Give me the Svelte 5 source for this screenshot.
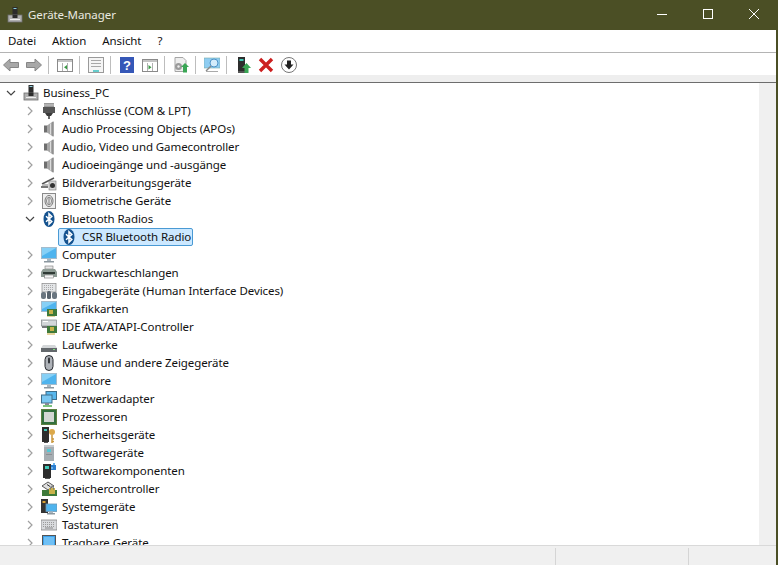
<script lang="ts">
  const menus = ['Datei', 'Aktion', 'Ansicht', '?']

  const groups = [
    { label: 'Anschlüsse (COM & LPT)', icon: 'port' },
    { label: 'Audio Processing Objects (APOs)', icon: 'speaker' },
    { label: 'Audio, Video und Gamecontroller', icon: 'speaker' },
    { label: 'Audioeingänge und -ausgänge', icon: 'speaker' },
    { label: 'Bildverarbeitungsgeräte', icon: 'camera' },
    { label: 'Biometrische Geräte', icon: 'finger' },
    { label: 'Bluetooth Radios', icon: 'bt', open: true },
    { label: 'CSR Bluetooth Radio', icon: 'bt', child: true },
    { label: 'Computer', icon: 'monitor' },
    { label: 'Druckwarteschlangen', icon: 'printer' },
    { label: 'Eingabegeräte (Human Interface Devices)', icon: 'hid' },
    { label: 'Grafikkarten', icon: 'gpu' },
    { label: 'IDE ATA/ATAPI-Controller', icon: 'ide' },
    { label: 'Laufwerke', icon: 'drive' },
    { label: 'Mäuse und andere Zeigegeräte', icon: 'mouse' },
    { label: 'Monitore', icon: 'monitor' },
    { label: 'Netzwerkadapter', icon: 'net' },
    { label: 'Prozessoren', icon: 'cpu' },
    { label: 'Sicherheitsgeräte', icon: 'key' },
    { label: 'Softwaregeräte', icon: 'tower' },
    { label: 'Softwarekomponenten', icon: 'swcomp' },
    { label: 'Speichercontroller', icon: 'storage' },
    { label: 'Systemgeräte', icon: 'system' },
    { label: 'Tastaturen', icon: 'keyboard' },
    { label: 'Tragbare Geräte', icon: 'portable' },
  ]
</script>

{#snippet pc()}
  <svg width="16" height="16" viewBox="0 0 16 16">
    <rect x="5.500" y="0" width="5" height="8" fill="#2c2c2c" />
    <rect x="6.500" y="1" width="3" height="1" fill="#8fd0e0" />
    <rect x="1" y="8" width="14" height="7" fill="#b0b0b0" stroke="#6e6e6e" stroke-width="0.8" />
    <rect x="5.500" y="8" width="5" height="3" fill="#2c2c2c" />
    <rect x="3" y="12" width="10" height="1" fill="#eee" />
  </svg>
{/snippet}

{#snippet icon(name)}
  <svg width="16" height="16" viewBox="0 0 16 16">
    {#if name === 'port'}
      <rect x="3" y="0" width="10" height="4" fill="#9a9a9a" />
      <path d="M4 1v2M6 1v2M8 1v2M10 1v2M12 1v2" stroke="#e4e4e4" stroke-width="0.7" />
      <rect x="2" y="4" width="12" height="6" fill="#555" />
      <path d="M4 10h8l-2 3h-4z" fill="#3a3a3a" />
      <rect x="7" y="13" width="2" height="3" fill="#666" />
    {:else if name === 'speaker'}
      <rect x="3" y="4.500" width="3.500" height="7" fill="#6f6f6f" />
      <path d="M6 4.500 12.500 0v16L6 11.500z" fill="#a6a6a6" />
      <path d="M9.500 2.500v11" stroke="#dcdcdc" />
      <path d="M12 1v14" stroke="#7c7c7c" />
    {:else if name === 'camera'}
      <path d="M1 9 13 3" stroke="#555" stroke-width="1.500" />
      <rect x="1" y="9" width="6" height="2" fill="#bbb" />
      <rect x="8" y="6" width="7" height="9" fill="#d4d4d4" stroke="#777" stroke-width="0.6" />
      <circle cx="11.500" cy="10.500" r="2.500" fill="#333" />
      <rect x="0" y="11" width="7" height="2" fill="#777" />
    {:else if name === 'finger'}
      <rect x="1.500" y="0.500" width="13" height="15" fill="#eee" stroke="#8a8a8a" />
      <ellipse cx="8" cy="8" rx="4" ry="5.500" fill="none" stroke="#777" />
      <ellipse cx="8" cy="8" rx="2.500" ry="3.800" fill="none" stroke="#888" />
      <path d="M8 5v6" stroke="#777" />
    {:else if name === 'bt'}
      <ellipse cx="8" cy="8" rx="5.500" ry="8" fill="#14528f" />
      <path d="M5 5.200 10.800 10.600 8 13.200V2.800l2.800 2.600L5 10.800" fill="none" stroke="#fff" stroke-width="1.500" />
    {:else if name === 'monitor'}
      <rect x="0.500" y="0.500" width="15" height="11" fill="#4fb4ee" stroke="#a3bccd" />
      <path d="M1 1h14L1 9z" fill="#86d0f6" />
      <rect x="6" y="12" width="4" height="2" fill="#a9b6bf" />
      <rect x="3" y="14" width="10" height="1.500" fill="#8b979f" />
    {:else if name === 'printer'}
      <rect x="4" y="1" width="8" height="3" fill="#e8e8e8" stroke="#777" stroke-width="0.6" />
      <path d="M2 4h12l2 3v5H0V7z" fill="#8c9a93" />
      <rect x="2" y="7" width="12" height="2" fill="#2f3a35" />
      <rect x="3.500" y="10" width="9" height="3" fill="#f6f6f6" stroke="#666" stroke-width="0.5" />
    {:else if name === 'hid'}
      <rect x="1" y="0.500" width="14" height="8.500" fill="#e4e6e8" stroke="#888" stroke-width="0.7" />
      <path d="M3 2.500h10M3 4.500h10M3 6.500h10" stroke="#9a9a9a" stroke-width="0.8" stroke-dasharray="1 1" />
      <rect x="0" y="9" width="5" height="7" rx="2" fill="#6a7680" />
      <rect x="6" y="8" width="4" height="8" rx="1.500" fill="#59656f" />
      <rect x="11" y="9" width="5" height="7" rx="2" fill="#6a7680" />
    {:else if name === 'gpu'}
      <rect x="0.500" y="0.500" width="15" height="10" fill="#4fb4ee" stroke="#a3bccd" />
      <path d="M1 1h14L1 8z" fill="#86d0f6" />
      <rect x="6" y="8" width="10" height="7" fill="#3e7a3a" />
      <rect x="8" y="9" width="4" height="4" fill="#c9b24a" />
      <path d="M7 15v1M9 15v1M11 15v1M13 15v1" stroke="#c9a93a" />
    {:else if name === 'ide'}
      <rect x="0.500" y="1" width="15" height="6" fill="#d3d7d9" stroke="#7f8588" stroke-width="0.7" />
      <rect x="2" y="2" width="5" height="1" fill="#fff" />
      <rect x="6" y="7" width="10" height="7" fill="#3e7a3a" />
      <rect x="9" y="8" width="4" height="4" fill="#c9b24a" />
      <rect x="1" y="7" width="5" height="2" fill="#75797b" />
      <path d="M7 14v2M9 14v2M11 14v2M13 14v2" stroke="#c9a93a" />
    {:else if name === 'drive'}
      <path d="M2 8h12l2 3H0z" fill="#d4d7d9" />
      <rect x="0" y="11" width="16" height="4" fill="#63686c" />
      <rect x="12" y="12" width="2" height="1" fill="#7fe07f" />
    {:else if name === 'mouse'}
      <rect x="4" y="0.500" width="8" height="15" rx="4" fill="#aeb2b8" stroke="#26292e" />
      <rect x="7" y="2.500" width="2" height="6" rx="1" fill="#33363b" />
    {:else if name === 'net'}
      <rect x="5" y="0.500" width="10.500" height="8" fill="#57b6ec" stroke="#3e6f8c" />
      <rect x="0.500" y="4" width="10.500" height="8" fill="#7bc8f2" stroke="#3e6f8c" />
      <rect x="4" y="12" width="4" height="2" fill="#889" />
      <path d="M2 15h9" stroke="#4fae4f" stroke-width="1.500" />
    {:else if name === 'cpu'}
      <rect x="0" y="0" width="16" height="16" fill="#33703e" />
      <rect x="0.500" y="0.500" width="15" height="15" fill="none" stroke="#c8a84a" stroke-width="0.6" stroke-dasharray="1 1" />
      <rect x="3" y="3" width="10" height="10" fill="#d3d7d3" />
    {:else if name === 'key'}
      <rect x="1" y="0" width="7" height="15" fill="#2d2d2d" />
      <rect x="3" y="2" width="3" height="2" fill="#3fc9b8" />
      <rect x="3" y="15" width="4" height="1" fill="#555" />
      <circle cx="11" cy="5" r="3" fill="#dba84a" />
      <path d="M11 8v8M11 12h2M11 14.500h2" stroke="#c9973c" stroke-width="1.500" />
    {:else if name === 'tower'}
      <path d="M3 1.500h10V16H3z" fill="#a6adb2" />
      <rect x="3" y="0" width="10" height="2" fill="#c6cbcf" />
      <rect x="6" y="4" width="4" height="3" fill="#55c7d6" />
      <rect x="5" y="9" width="6" height="1" fill="#8a8f93" />
    {:else if name === 'swcomp'}
      <rect x="2" y="1" width="8" height="14" fill="#2d2d2d" />
      <rect x="4" y="3" width="4" height="3" fill="#3fc9b8" />
      <rect x="4" y="15" width="5" height="1" fill="#555" />
      <path d="M10 2h5v5h-5z" fill="#2e7fd0" />
      <path d="M12 0h2v2h-2zM10 4h2v2h-2z" fill="#6ab4ee" />
    {:else if name === 'storage'}
      <path d="M1 5 7 1l6 4-6 4z" fill="#e0e0e0" stroke="#333" stroke-width="0.8" />
      <path d="M6 3.500 9 5.500" stroke="#333" />
      <rect x="1" y="9" width="15" height="6" fill="#3e7a3a" />
      <rect x="8" y="7" width="6" height="6" fill="#c9b24a" />
      <path d="M9.500 8.500v-2a1.500 1.500 0 0 1 3 0v2" fill="none" stroke="#777" />
    {:else if name === 'system'}
      <rect x="0" y="0" width="7" height="14" fill="#333" />
      <rect x="1.500" y="2" width="3" height="2" fill="#d9a030" />
      <rect x="5" y="5" width="11" height="7.500" fill="#4fb4ee" stroke="#6e98b3" stroke-width="0.8" />
      <rect x="8" y="12.500" width="4" height="1.500" fill="#a9b6bf" />
      <rect x="6" y="14" width="8" height="1.500" fill="#8b979f" />
    {:else if name === 'keyboard'}
      <rect x="0" y="3" width="16" height="10" fill="#d9dbde" stroke="#777" stroke-width="0.7" />
      <path d="M2 5.500h12M2 7.500h12M2 9.500h12" stroke="#9a9a9a" stroke-dasharray="1 1" />
      <rect x="4" y="10.500" width="8" height="1" fill="#8a8a8a" />
    {:else if name === 'portable'}
      <rect x="1.500" y="0.500" width="13" height="15" fill="#3da3ee" stroke="#555" />
      <rect x="3" y="2" width="10" height="10" fill="#6fc0f5" />
    {/if}
  </svg>
{/snippet}

{#snippet expanded()}
  <svg class="chev" width="10" height="10" viewBox="0 0 10 10"><path d="M1 3l4 4 4-4" fill="none" stroke="#444" stroke-width="1.200" /></svg>
{/snippet}

<div class="window">
  <header class="titlebar">
    <span class="title-icon">{@render pc()}</span>
    <span class="title">Geräte-Manager</span>
    <div class="caption">
      <svg width="46" height="30" viewBox="0 0 46 30"><path d="M18 14.500h10" stroke="#fff" /></svg>
      <svg width="46" height="30" viewBox="0 0 46 30"><rect x="18.500" y="9.500" width="9" height="9" fill="none" stroke="#fff" /></svg>
      <svg width="46" height="30" viewBox="0 0 46 30"><path d="M18 9l10 10M28 9 18 19" stroke="#fff" /></svg>
    </div>
  </header>

  <nav class="menubar">
    {#each menus as m}
      <span>{m}</span>
    {/each}
  </nav>

  <div class="toolbar">
    <svg width="16" height="16" viewBox="0 0 16 16"><path d="M.5 8 7 2v3.500h8.500v5H7V14z" fill="#a8a8a8" stroke="#868686" /></svg>
    <svg width="16" height="16" viewBox="0 0 16 16"><path d="M15.500 8 9 2v3.500H.5v5H9V14z" fill="#a8a8a8" stroke="#868686" /></svg>
    <i class="sep"></i>
    <svg width="16" height="16" viewBox="0 0 16 16"><rect x="0.500" y="2.500" width="15" height="12" fill="#fff" stroke="#8a8a8a" /><rect x="1" y="3" width="14" height="2" fill="#c4c4c4" /><path d="M5.500 6v8M10.500 6v8" stroke="#b0b0b0" /><path d="M10 8v4.500L7 10.200z" fill="#3a9a45" /></svg>
    <i class="sep"></i>
    <svg width="16" height="16" viewBox="0 0 16 16"><rect x="0.500" y="0.500" width="15" height="15" fill="#f5f5f5" stroke="#9a9a9a" /><path d="M3 3.500h10M3 6.500h10M3 9.500h10" stroke="#a8a8a8" /><rect x="5" y="13" width="6" height="2" fill="#6cc" /></svg>
    <i class="sep"></i>
    <svg width="16" height="16" viewBox="0 0 16 16"><rect x="1" y="0" width="14" height="16" fill="#3557b7" /><text x="8" y="13" font-size="13" font-weight="700" font-family="Liberation Sans" text-anchor="middle" fill="#fff">?</text></svg>
    <svg width="16" height="16" viewBox="0 0 16 16"><rect x="0.500" y="2.500" width="15" height="12" fill="#fff" stroke="#8a8a8a" /><rect x="1" y="3" width="14" height="2" fill="#c4c4c4" /><path d="M5.500 6v8M10.500 6v8" stroke="#b0b0b0" /><path d="M6.500 8v4.500l3-2.300z" fill="#3a9a45" /></svg>
    <i class="sep"></i>
    <svg width="16" height="16" viewBox="0 0 16 16"><path d="M2 .5h8l3 3v11H2z" fill="#eee" stroke="#a5a5a5" /><circle cx="5.500" cy="9.500" r="3.500" fill="#9a9a9a" /><circle cx="5.500" cy="9.500" r="1.200" fill="#eee" /><path d="M12 6l4 4h-2v5.500h-4V10H8z" fill="#3aa655" /></svg>
    <i class="sep"></i>
    <svg width="16" height="16" viewBox="0 0 16 16"><rect x="0" y="1" width="16" height="10" fill="#8fcdf2" stroke="#7aa" stroke-width="0.6" /><circle cx="10" cy="6" r="4" fill="#d3ecfb" stroke="#4d93c7" /><path d="M7 9l-5 5" stroke="#8a8a8a" stroke-width="1.500" /><rect x="2" y="14" width="12" height="1" fill="#aaa" /></svg>
    <i class="sep"></i>
    <svg width="16" height="16" viewBox="0 0 16 16"><rect x="3" y="0" width="7" height="14" fill="#2d2d2d" /><rect x="4.500" y="2" width="4" height="2" fill="#3fc9b8" /><rect x="3" y="14" width="7" height="2" fill="#555" /><path d="M11.500 6l4.500 5h-2.500v5h-4v-5H7z" fill="#3aa655" /></svg>
    <svg width="16" height="16" viewBox="0 0 16 16"><path d="M2 2l12 12M14 2 2 14" stroke="#cc1f1f" stroke-width="3.400" /></svg>
    <svg width="16" height="16" viewBox="0 0 16 16"><circle cx="8" cy="8" r="7.500" fill="#fff" stroke="#777" /><path d="M6 3.500h4v4h2.500L8 12.500 3.500 7.500H6z" fill="#222" /></svg>
  </div>
  <div class="strip"></div>

  <div class="content">
    <div class="tree">
      <div class="row root">
        {@render expanded()}
        {@render pc()}
        <span class="label">Business_PC</span>
      </div>
      {#each groups as g}
        <div class="row" class:child={g.child}>
          {#if g.child}
            <div class="selected">
              {@render icon(g.icon)}
              <span class="label">{g.label}</span>
            </div>
          {:else}
            {#if g.open}
              {@render expanded()}
            {:else}
              <svg class="chev" width="10" height="10" viewBox="0 0 10 10"><path d="M3 1l4 4-4 4" fill="none" stroke="#a0a0a0" stroke-width="1.200" /></svg>
            {/if}
            {@render icon(g.icon)}
            <span class="label">{g.label}</span>
          {/if}
        </div>
      {/each}
    </div>
    <div class="scrollbar"></div>
  </div>

  <footer class="status">
    <span class="cell"></span>
    <span class="cell mid"></span>
    <span class="cell last"></span>
  </footer>
</div>

<style>
  :global(body) {
    margin: 0;
    background: #fff;
  }

  .window {
    width: 778px;
    height: 565px;
    display: flex;
    flex-direction: column;
    overflow: hidden;
    box-sizing: border-box;
    border-right: 2px solid #4b4f25;
    font-family: 'Noto Sans', 'Open Sans', sans-serif;
    font-size: 11.5px;
    letter-spacing: -0.08px;
    color: #111;
  }

  .titlebar {
    height: 30px;
    margin-right: -2px;
    flex: none;
    display: flex;
    align-items: center;
    background: #4b4f25;
    color: #e9e9e0;
  }

  .title-icon {
    display: flex;
    margin-left: 7px;
  }

  .title {
    margin-left: 5px;
    padding-bottom: 2px;
  }

  .caption {
    margin-left: auto;
    margin-right: 1px;
    display: flex;
  }

  .menubar {
    height: 22px;
    flex: none;
    box-sizing: content-box;
    display: flex;
    align-items: center;
    gap: 16px;
    padding-left: 8px;
    background: #fff;
    border-bottom: 1px solid #b4b4b4;
  }

  .menubar span {
    padding-bottom: 2px;
  }

  .toolbar {
    height: 22px;
    flex: none;
    box-sizing: border-box;
    padding: 2px 0 0 3px;
    display: flex;
    align-items: center;
    gap: 7px;
    background: #fff;
  }

  .sep {
    width: 1px;
    height: 18px;
    margin: 0 1px 0 -1px;
    background: #bdbdbd;
  }

  .strip {
    height: 7px;
    flex: none;
    background: #eeeeee;
    border-bottom: 1px solid #6d6d6d;
  }

  .content {
    flex: 1;
    min-height: 0;
    display: flex;
    border-bottom: 1px solid #d9d9d9;
  }

  .tree {
    flex: 1;
    min-width: 0;
    overflow: hidden;
    padding-top: 1px;
  }

  .scrollbar {
    width: 17px;
    flex: none;
    background: #f0f0f0;
  }

  .row {
    height: 18px;
    display: flex;
    align-items: center;
    padding-left: 25px;
    white-space: nowrap;
  }

  .row.root {
    padding-left: 6px;
  }

  .chev {
    flex: none;
    margin-right: 6px;
  }

  .root .chev {
    margin-right: 7px;
  }

  .label {
    margin-left: 5px;
    padding-bottom: 2px;
  }

  .root .label {
    margin-left: 4px;
  }

  .row.child {
    padding-left: 58px;
  }

  .selected {
    display: flex;
    align-items: center;
    height: 18px;
    padding: 0 1px 0 2px;
    box-sizing: border-box;
    background: #cce8ff;
    border: 1px solid #4a9ad4;
    border-radius: 2px;
  }

  .status {
    height: 19px;
    flex: none;
    display: flex;
    background: #f0f0f0;
  }

  .cell {
    width: 556px;
    box-sizing: border-box;
    border-right: 1px solid #d5d5d5;
    margin-top: 2px;
  }

  .cell.mid {
    width: 133px;
  }

  .cell.last {
    flex: 1;
    width: auto;
    border-right: none;
  }
</style>
